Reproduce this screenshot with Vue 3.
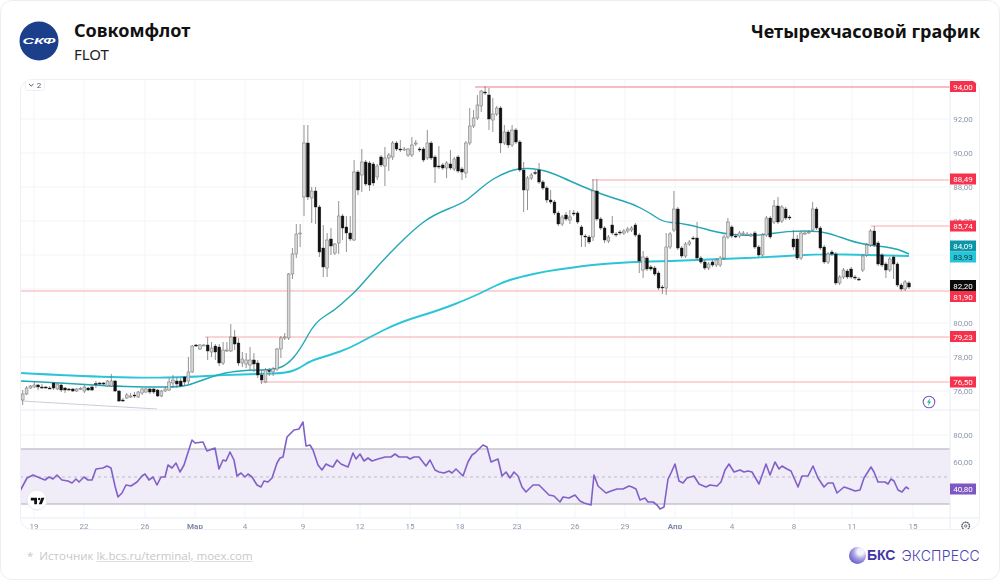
<script setup>
// chart data is in page pixels, the svg viewBox starts at the chart's corner
const rawCandles = [
  [400,394,390,405],[394,388,386,395],[388,386,385,389],[387,385,381,388],[385,387,384,390],[387,387.5,384,389],[387,388,386,389],[388,388.5,386,389],
  [383,388,382,390],[389,384,383,390],[385,390,384,392],[388,390,387,393],[389,390,388,391],[389,391,388,392],[391,389,388,392],[389,388.5,387,390],
  [391,387,385,393],[388,390,387,391],[387,390,385,391],[383.5,384,381,388],[383,383.5,382,386],[383,383.5,382,385],[386,381,380,387],[386,381,374,387],
  [381,391,380,392],[391,401,390,402],[400,401,398,402],[398,395,393,399],[396,396,393,398],[395,395.5,392,398],[397,392,391,398],[393,389,388,395],
  [392,389,388,393],[389,392,388,394],[389,392,388,394],[390,396,389,397],[396,391,390,397],[391,389,387,392],[390,382,378,391],[383,380,375,388],
  [381,384,377,388],[381,386,378,387],[377,382,376,386],[381,372,357,384],[372,346,345,373],[345,345.5,344,347],[349,345,344,350],[345,345,344,346],
  [345,351,337,360],[352,348,342,357],[346,352,344,360],[347,363,344,366],[363,350,342,365],[350,350,342,352],[351,337,324,352],[337,344,330,350],
  [343,363,338,366],[363,359,352,367],[364,360,353,368],[365,360,347,370],[360,364,353,372],[363,375,360,378],[375,380,370,384],[382,370,368,383],
  [370.5,371,368,376],[372,369,367,376],[369,349,348,371],[349,338,336,358],[337,337,333,340],[338,274,273,340],
  [274,254,248,279],[254,234,224,258],[233,233,224,247],[197,143,125,216],[143,197,125,200],[198,191,187,223],[191,207,187,224],[207,252,205,257],
  [248,267,225,277],[268,240,233,277],[239,246,228,255],[253,244,243,255],[243,216,201,254],[216,228,214,240],[227,233,216,252],[233,239,216,241],
  [240,172,160,241],[172,190,170,195],[175,162,149,192],[162,184,160,186],[163,185,161,191],[164,183,162,186],[177,166,164,180],[157,165,155,167],
  [166,158,147,186],[158,155,153,171],[157,143,141,160],[143,149,141,151],[149,150,140,152],[149,149,147,151],[155,149,148,157],[155,145,137,157],
  [143,143,140,146],[149,150,147,152],[149,160,147,162],[158,143,130,160],[143,158,141,160],[157,167,155,183],[166,167,146,169],[165,168,163,170],
  [168,163,161,178],[164,168,150,170],[169,159,157,171],[157,171,155,173],[169,172,167,180],[173,143,141,178],[143,126,108,145],[126,118,110,128],
  [118,105,95,120],[106,91,90,112],[92,93,86,95],[95,119,88,130],[120,114,98,132],[114,108,106,116],[108,143,106,153],[143,132,125,145],
  [132,145,130,148],[145,130,125,147],[130,142,128,144],[142,170,140,172],[170,190,162,212],[190,178,176,210],[178,175,173,180],[172.5,173,170,175],
  [170,182,163,184],[182,188,180,190],[188,200,186,203],[200,202,190,204],[202,213,200,215],[213,224,211,226],[224,217,215,226],[215,219,212,221],
  [220,217,210,224],[213,213.5,210,216],[213,222,211,224],[227,235,225,247],[236,237,234,247],[237,242,235,244],[237,191,179,241],[191,219,179,221],
  [219,228,217,230],[228,240,226,243],[241,237,235,243],[225,233,216,235],[234,235,232,237],[232,233,230,235],[233,231,229,235],[231,229,227,233],
  [230,228,226,232],[225,235,223,237],[235,261,233,273],[270,257,251,278],[258,269,256,271],[267,269,265,271],[268,274,266,276],[273,288,271,290],
  [287,288,285,294],[288,247,233,295],[247,234,232,249],[230,209,191,232],[209,248,207,250],[248,256,246,258],[256,244,242,258],[244,242,240,246],
  [238,238.5,236,240],[238,258,222,260],[258,262,256,264],[262,268,260,270],[268,264,262,270],[262,265,260,267],[265,260,258,267],[265,258,256,267],
  [258,237,235,260],[237,222,218,239],[227,236,225,238],[236,236.5,234,238],[236,233,231,238],[233,233,231,235],[234,234,232,236],[235,235,233,237],
  [233,247,231,249],[247,255,245,257],[255,235,233,257],[235,218,216,237],[218,237,216,239],[222,206,200,224],[206,222,197,224],[221,207,205,223],
  [209,218,207,220],[217,218,215,220],[239,247,230,250],[239,258,235,260],[258,233,231,260],[233,233,231,235],[232,232,230,234],[230,209,202,232],
  [209,228,207,230],[228,248,226,250],[247,262,245,264],[262,254,252,264],[252,254,250,256],[254,283,252,285],[283,277,275,285],[277,270,268,279],
  [271,277,269,279],[269,277,267,279],[277,278,275,280],[279,279.5,277,281],[270,256,254,272],[255,245,243,257],[245,231,229,247],[231,245,226,247],
  [243,264,241,266],[255,265,253,267],[264,270,262,278],[270,259,257,272],[257,264,255,279],[264,285,262,287],[285,289,283,291],[289,282,280,291],
  [283,287,281,289]
]

const candleStep = (909 - 22.7) / (rawCandles.length - 1)
const candles = rawCandles.map(([o, c, h, l], i) => ({
  x: 22.7 + i * candleStep,
  top: Math.min(o, c),
  height: Math.max(Math.abs(o - c), 1),
  high: h,
  low: l,
  up: c <= o
}))

// rounds the corners of a moving average through the segment midpoints
function smooth(points) {
  const pts = points.split(' ').map((p) => p.split(',').map(Number))
  let d = `M${pts[0][0]} ${pts[0][1]}`
  for (let i = 1; i < pts.length - 1; i++) {
    const mx = (pts[i][0] + pts[i + 1][0]) / 2
    const my = (pts[i][1] + pts[i + 1][1]) / 2
    d += ` Q${pts[i][0]} ${pts[i][1]} ${mx} ${my}`
  }
  const last = pts[pts.length - 1]
  return `${d} L${last[0]} ${last[1]}`
}

const slowMa = smooth('20,381 43,382 77,384 110,386 143,387 183,387 197,382 217,375 230,372 250,370 273,370 287,365 300,350 315,322 335,310 348,298 357,290 383,260 413,230 433,215 463,203 473,195 487,183 500,175 518,168 540,169 557,175 570,181 593,191 613,198 633,204 650,213 663,222 680,223 698,227 723,234 757,236 787,231 820,231 837,236 860,244 895,248 909,254')
const fastMa = smooth('20,373 77,376 143,378 190,377 223,375 260,374 287,373 300,368 310,361 330,355 350,348 370,337 400,322 440,310 470,298 487,290 503,282 520,277 547,271 570,268 590,265 630,262 670,261 723,259 770,257 820,254 870,255 909,256')
const rsi = '20,491 27,478 33,475 40,478 45,480 49,477 53,479 57,475 62,480 68,481 72,483 76,479 79,482 84,477 88,480 92,480 96,469 103,468 107,466 111,468 115,486 118,497 122,493 126,485 131,486 137,482 142,476 145,474 149,480 153,477 157,485 161,477 165,477 168,465 172,468 176,463 180,472 184,465 192,440 195,443 203,442 207,451 215,448 219,469 223,460 226,461 230,452 234,460 237,476 241,473 245,477 248,474 252,477 257,485 261,487 264,481 268,482 272,478 277,463 280,458 283,457 287,437 294,430 299,429 303,422 306,446 310,445 313,450 318,465 322,470 326,464 330,466 333,467 337,460 341,464 348,467 353,453 356,459 360,454 364,461 368,458 372,461 378,459 385,457 391,457 395,454 399,457 407,457 410,459 414,457 419,457 426,466 430,460 435,470 439,472 444,473 449,471 452,473 456,469 463,476 468,462 472,455 475,453 483,445 487,447 491,462 498,459 502,476 506,472 510,478 514,472 518,476 522,487 526,492 533,485 539,485 544,490 549,495 554,496 560,502 563,497 569,498 575,495 580,501 584,503 591,505 594,475 598,486 606,493 611,491 617,489 623,489 629,486 632,487 636,489 640,500 645,498 648,502 653,502 657,505 660,509 664,507 668,479 671,473 675,464 679,481 683,483 687,478 694,476 699,484 706,487 710,485 717,486 721,482 725,470 729,464 734,472 740,470 744,472 748,471 752,472 759,484 766,464 770,475 775,462 779,469 782,466 787,469 791,471 798,487 802,476 808,476 813,466 818,478 824,487 828,483 833,483 837,493 844,487 850,489 855,491 860,490 864,478 871,467 874,472 878,482 885,482 888,484 891,479 894,481 898,490 902,492 906,487 909,489'

const timeTicks = [
  { x: 34, label: '19' }, { x: 84, label: '22' }, { x: 145, label: '26' }, { x: 195, label: 'Мар', bold: true },
  { x: 245, label: '4' }, { x: 303, label: '9' }, { x: 360, label: '12' }, { x: 410, label: '15' },
  { x: 460, label: '18' }, { x: 517, label: '23' }, { x: 575, label: '26' }, { x: 625, label: '29' },
  { x: 675, label: 'Апр', bold: true }, { x: 732, label: '4' }, { x: 794, label: '8' }, { x: 852, label: '11' }, { x: 913, label: '15' }
]

const priceTicks = [
  { y: 119, label: '92,00' }, { y: 153, label: '90,00' }, { y: 187, label: '88,00' }, { y: 221, label: '86,00' },
  { y: 255, label: '84,00', hidden: true }, { y: 289, label: '82,00', hidden: true }, { y: 323, label: '80,00' },
  { y: 357, label: '78,00' }, { y: 391, label: '76,00' }, { y: 435, label: '80,00' }, { y: 462, label: '60,00' }
]

const levels = [
  { x: 475, y: 87, strong: true }, { x: 592, y: 180 }, { x: 871, y: 226 },
  { x: 20, y: 291 }, { x: 205, y: 337 }, { x: 260, y: 382 }
]

const tags = [
  { y: 86.5, label: '94,00', kind: 'red' }, { y: 179, label: '88,49', kind: 'red' }, { y: 226, label: '85,74', kind: 'red' },
  { y: 246, label: '84,09', kind: 'teal' }, { y: 257, label: '83,93', kind: 'cyan' }, { y: 285.5, label: '82,20', kind: 'black' },
  { y: 296.5, label: '81,90', kind: 'red' }, { y: 336.5, label: '79,23', kind: 'red' }, { y: 382, label: '76,50', kind: 'red' },
  { y: 489, label: '40,80', kind: 'purple' }
]
</script>

<template>
  <div class="card">
    <header class="head">
      <svg class="logo" width="40" height="40" viewBox="0 0 40 40">
        <circle cx="20" cy="20" r="19.5" fill="#1c3f8c" />
        <text class="logo-text" x="3.5" y="23.2" textLength="33" lengthAdjust="spacingAndGlyphs">СКФ</text>
      </svg>
      <div class="head-name">
        <div class="title">Совкомфлот</div>
        <div class="ticker">FLOT</div>
      </div>
      <div class="title period">Четырехчасовой график</div>
    </header>

    <div class="chart">
      <svg width="960" height="451" viewBox="20 79 960 451">
        <g class="grid">
          <line v-for="t in timeTicks" :key="t.x" :x1="t.x" y1="80" :x2="t.x" y2="518" />
          <line v-for="t in priceTicks" :key="t.y" x1="20" :y1="t.y" x2="950" :y2="t.y" />
          <line x1="20" y1="489" x2="950" y2="489" />
        </g>

        <rect class="band" x="20" y="449" width="930" height="55" />
        <line class="band-edge" x1="20" y1="449" x2="950" y2="449" />
        <line class="band-edge" x1="20" y1="504" x2="950" y2="504" />
        <line class="band-mid" x1="20" y1="477" x2="950" y2="477" />

        <line class="trend" x1="22" y1="401" x2="157" y2="409" />
        <line v-for="l in levels" :key="l.y" class="level" :class="{ strong: l.strong }" :x1="l.x" :y1="l.y" x2="950" :y2="l.y" />

        <path class="ma ma-fast" :d="fastMa" />
        <path class="ma ma-slow" :d="slowMa" />

        <g v-for="(c, i) in candles" :key="i">
          <line class="wick" :x1="c.x" :y1="c.high" :x2="c.x" :y2="c.low" />
          <rect :class="c.up ? 'body-up' : 'body-down'" :x="c.x - 1.4" :y="c.top" width="2.8" :height="c.height" />
        </g>

        <polyline class="rsi" :points="rsi" />

        <g class="frame">
          <line x1="20" y1="410" x2="980" y2="410" />
          <line x1="20" y1="518" x2="980" y2="518" />
          <line x1="950" y1="79" x2="950" y2="530" />
        </g>

        <g class="axis-text">
          <template v-for="t in priceTicks" :key="t.y">
            <text v-if="!t.hidden" x="963" :y="t.y + 3">{{ t.label }}</text>
          </template>
          <text v-for="t in timeTicks" :key="t.x" :x="t.x" y="529" :class="{ month: t.bold }">{{ t.label }}</text>
        </g>

        <g v-for="t in tags" :key="t.y + t.label">
          <rect class="tag" :class="t.kind" x="950" :y="t.y - 5.5" width="26" height="11" />
          <text class="tag-text" :class="t.kind" x="963" :y="t.y + 3">{{ t.label }}</text>
        </g>

        <!-- collapse button of the indicator legend -->
        <rect class="legend-btn" x="25.5" y="79.5" width="19" height="11" rx="2" />
        <path class="legend-chevron" d="M29 84l2.2 2 2.2-2" />
        <text class="legend-num" x="39" y="88">2</text>

        <!-- dividend / event mark -->
        <circle class="event" cx="929" cy="402" r="5.8" />
        <path class="event-bolt" d="M930 398l-3 4.6h1.8l-.8 3.4 3-4.6h-1.8z" />

        <!-- tradingview badge -->
        <circle class="tv-badge" cx="37" cy="500" r="10" />
        <path class="tv-mark" d="M30.8 497.8h6.2v6.4h-2.8v-3.6h-3.4zM38.8 504.2l2.6-6.4h3l-2.6 6.4z" />
        <circle class="tv-mark" cx="39.2" cy="499" r="1.2" />

        <!-- settings -->
        <circle class="gear" cx="965.7" cy="526" r="3.8" />
        <circle class="gear-dot" cx="965.7" cy="526" r="1.2" />
      </svg>
    </div>

    <footer class="foot">
      <div class="source"><span class="star">*</span>Источник <span class="source-link">lk.bcs.ru/terminal, moex.com</span></div>
      <div class="brand">
        <span class="sphere"></span>
        <span class="brand-bold">БКС</span>
        <span class="brand-thin">ЭКСПРЕСС</span>
      </div>
    </footer>
  </div>
</template>

<style>
body {
  background: #fff;
}
</style>

<style scoped>
.card {
  width: 1000px;
  height: 580px;
  box-sizing: border-box;
  padding: 0 19px;
  border: 1px solid #eeeeee;
  border-radius: 12px;
  background: #fff;
  font-family: "Noto Sans", "Open Sans", sans-serif;
  display: flex;
  flex-direction: column;
}

.head {
  height: 78px;
  display: flex;
  align-items: center;
  flex-shrink: 0;
  padding-top: 2px;
  box-sizing: border-box;
}

.logo {
  margin-left: -1px;
  margin-right: 15px;
  flex-shrink: 0;
}

.logo-text {
  font-family: "Liberation Sans", sans-serif;
  font-weight: 700;
  font-style: italic;
  font-size: 9px;
  fill: #fff;
}

.head-name {
  display: flex;
  flex-direction: column;
  gap: 2px;
}

.title {
  font-size: 18px;
  line-height: 24px;
  font-weight: 700;
  color: #111;
}

.ticker {
  font-size: 15px;
  line-height: 20px;
  color: #222;
}

.period {
  margin-left: auto;
  margin-top: -20px;
}

.chart {
  width: 960px;
  height: 451px;
  flex-shrink: 0;
  border: 1px solid #eef0f5;
  border-radius: 12px;
  box-sizing: border-box;
  overflow: hidden;
}

.chart svg {
  display: block;
  margin: -1px;
  filter: blur(0.35px);
}

.grid line {
  stroke: #f4f5f9;
  stroke-width: 1;
}

.band {
  fill: #f0ecf8;
}

.band-edge {
  stroke: #c4c4cc;
  stroke-width: 1.4;
}

.band-mid {
  stroke: #bdbdc4;
  stroke-width: 1;
  stroke-dasharray: 3 3;
}

.trend {
  stroke: #c9ccd4;
  stroke-width: 1;
}

.level {
  stroke: #f9a9ae;
  stroke-width: 1.2;
}

.level.strong {
  stroke: #f77b84;
}

.ma {
  fill: none;
  stroke-linejoin: round;
}

.ma-fast {
  stroke: #2cc5d8;
  stroke-width: 1.9;
}

.ma-slow {
  stroke: #22a7b6;
  stroke-width: 1.4;
}

.wick {
  stroke: #777;
  stroke-width: 0.8;
}

.body-up {
  fill: #d6d6d6;
  stroke: #707070;
  stroke-width: 0.5;
}

.body-down {
  fill: #111;
  stroke: #222;
  stroke-width: 0.4;
}

.rsi {
  fill: none;
  stroke: #8160c8;
  stroke-width: 1.6;
  stroke-linejoin: round;
}

.frame line {
  stroke: #e8ecf4;
  stroke-width: 1;
}

.axis-text text {
  font-family: "Roboto", "Noto Sans", sans-serif;
  font-size: 8px;
  fill: #8c96ae;
  text-anchor: middle;
}

.axis-text text.month {
  font-weight: 700;
  fill: #7c88a4;
}

.tag.red {
  fill: #f7314b;
}

.tag.teal {
  fill: #0b97a7;
}

.tag.cyan {
  fill: #26c6da;
}

.tag.black {
  fill: #0b0b0b;
}

.tag.purple {
  fill: #7e57c2;
}

.tag-text {
  font-family: "Roboto", "Noto Sans", sans-serif;
  font-size: 8px;
  text-anchor: middle;
  fill: #fff;
}

.tag-text.cyan {
  fill: #10363c;
}

.legend-btn {
  fill: #fff;
  stroke: #eceef3;
  stroke-width: 1;
}

.legend-chevron {
  fill: none;
  stroke: #555a66;
  stroke-width: 1;
}

.legend-num {
  font-family: "Roboto", sans-serif;
  font-size: 8px;
  fill: #555a66;
  text-anchor: middle;
}

.event {
  fill: #fff;
  stroke: #7e57c2;
  stroke-width: 1.1;
}

.event-bolt {
  fill: #19b98a;
}

.tv-badge {
  fill: #fff;
  stroke: #e6e8ee;
  stroke-width: 1;
}

.tv-mark {
  fill: #111;
}

.gear {
  fill: none;
  stroke: #555b6a;
  stroke-width: 1.4;
  stroke-dasharray: 1.6 0.5;
}

.gear-dot {
  fill: none;
  stroke: #555b6a;
  stroke-width: 0.8;
}

.foot {
  flex: 1;
  display: flex;
  align-items: center;
  justify-content: space-between;
  padding-top: 1px;
}

.source {
  margin-left: 7px;
  font-family: "Open Sans", "Noto Sans", sans-serif;
  font-size: 11.5px;
  color: #c8c8c8;
}

.star {
  margin-right: 6px;
}

.source-link {
  text-decoration: underline;
  text-decoration-color: #dedede;
}

.brand {
  display: flex;
  align-items: center;
  gap: 1px;
}

.sphere {
  width: 17px;
  height: 17px;
  border-radius: 50%;
  background: radial-gradient(circle at 68% 28%, #f4f2fb 0 18%, #a9a3e2 42%, #5a50c4 85%);
}

.brand-bold {
  font-family: "Liberation Sans", sans-serif;
  font-weight: 700;
  font-size: 14px;
  color: #3f37a8;
}

.brand-thin {
  margin-left: 5px;
  font-family: "Inter", "Liberation Sans", sans-serif;
  font-weight: 300;
  font-size: 14px;
  letter-spacing: 0.2px;
  color: #4a42b0;
}
</style>
